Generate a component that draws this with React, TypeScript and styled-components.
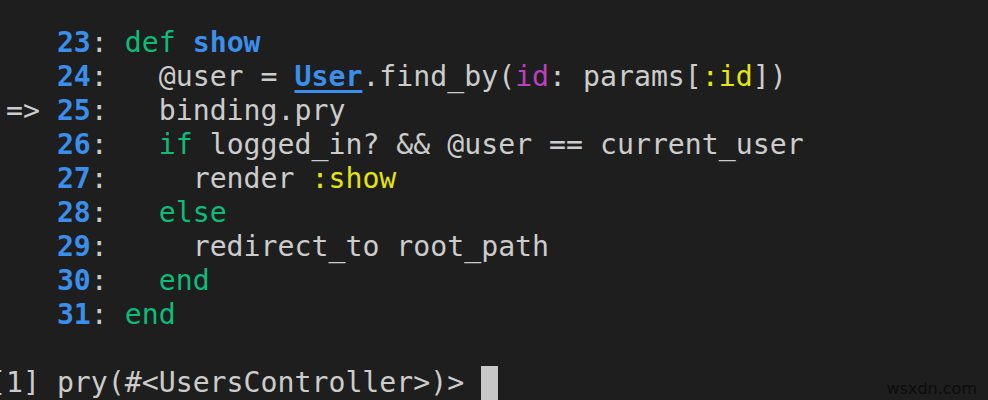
import React from "react";
import styled, { createGlobalStyle } from "styled-components";

const Global = createGlobalStyle`
  html, body { margin: 0; padding: 0; background: #1e1e1e; }
  body { width: 988px; height: 400px; overflow: hidden; }
`;

const Screen = styled.div`
  position: relative;
  width: 988px;
  height: 400px;
  overflow: hidden;
  background: #1e1e1e;
  padding-top: 26px;
  box-sizing: border-box;
`;

const Output = styled.pre`
  margin: 0 0 0 -11px;
  font-family: "DejaVu Sans Mono", "Liberation Mono", monospace;
  font-size: 28.2px;
  line-height: 34px;
  color: #cccccc;
  white-space: pre;
`;

const Row = styled.div`
  height: 34px;
`;

const Num = styled.span`
  color: #3b8eea;
  font-weight: bold;
`;

const Kw = styled.span`
  color: #0dbc79;
`;

const Method = styled.span`
  color: #3b8eea;
  font-weight: bold;
`;

const Const = styled.span`
  color: #3b8eea;
  font-weight: bold;
  text-decoration: underline;
  text-decoration-thickness: 3px;
  text-underline-offset: 4px;
`;

const Sym = styled.span`
  color: #e5e510;
`;

const Key = styled.span`
  color: #bc3fbc;
`;

const Cursor = styled.span`
  display: inline-block;
  width: 17px;
  height: 34px;
  background: #c8c8c8;
  vertical-align: top;
`;

const Watermark = styled.div`
  position: absolute;
  right: 11px;
  bottom: 2px;
  font-family: "DejaVu Sans", "Liberation Sans", sans-serif;
  font-size: 16px;
  color: #0c0c0c;
`;

const CodeLine: React.FC<{ n: number; current?: boolean; children?: React.ReactNode }> = ({
  n,
  current,
  children,
}) => (
  <Row>
    {current ? " => " : "    "}
    <Num>{n}</Num>: {children}
  </Row>
);

export default function App() {
  return (
    <>
      <Global />
      <Screen>
        <Output>
          <CodeLine n={23}>
            <Kw>def</Kw> <Method>show</Method>
          </CodeLine>
          <CodeLine n={24}>
            {"  @user = "}
            <Const>User</Const>.find_by(<Key>id</Key>: params[<Sym>:id</Sym>])
          </CodeLine>
          <CodeLine n={25} current>
            {"  binding.pry"}
          </CodeLine>
          <CodeLine n={26}>
            {"  "}
            <Kw>if</Kw> logged_in? &amp;&amp; @user == current_user
          </CodeLine>
          <CodeLine n={27}>
            {"    render "}
            <Sym>:show</Sym>
          </CodeLine>
          <CodeLine n={28}>
            {"  "}
            <Kw>else</Kw>
          </CodeLine>
          <CodeLine n={29}>{"    redirect_to root_path"}</CodeLine>
          <CodeLine n={30}>
            {"  "}
            <Kw>end</Kw>
          </CodeLine>
          <CodeLine n={31}>
            <Kw>end</Kw>
          </CodeLine>
          <Row />
          <Row>
            {"[1] pry(#<UsersController>)> "}
            <Cursor />
          </Row>
        </Output>
        <Watermark>wsxdn.com</Watermark>
      </Screen>
    </>
  );
}
